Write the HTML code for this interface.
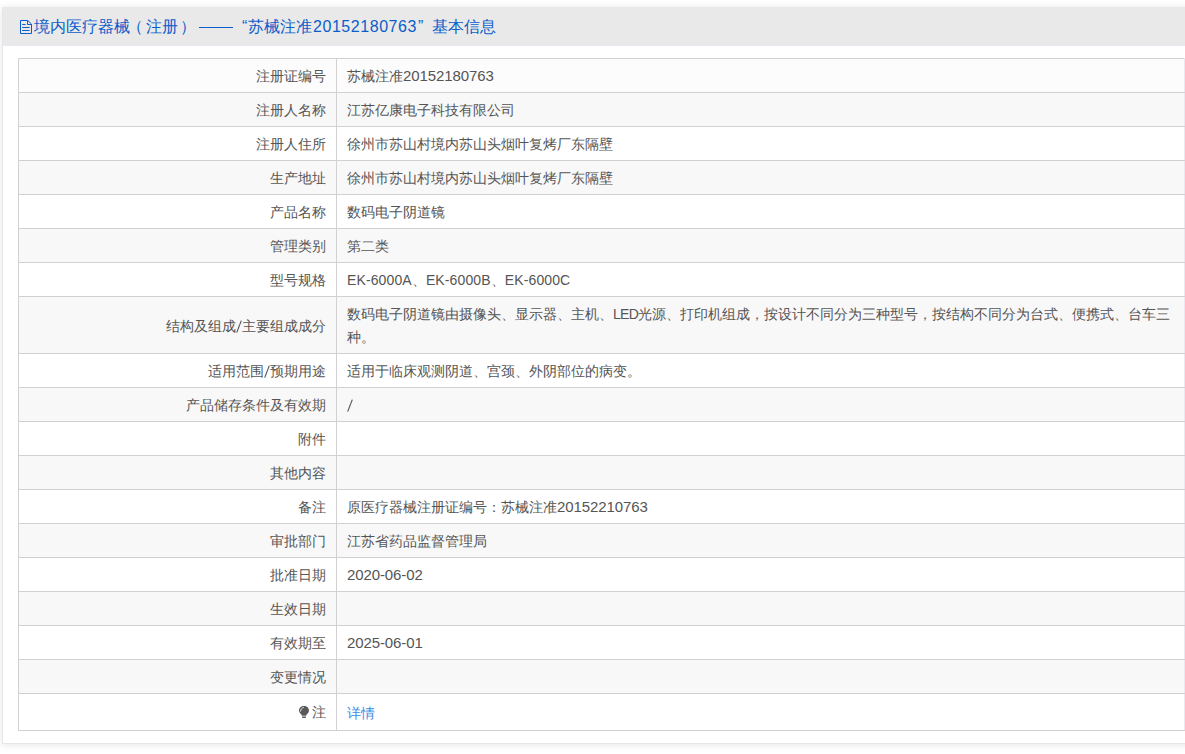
<!DOCTYPE html>
<html>
<head>
<meta charset="utf-8">
<style>
html,body{margin:0;padding:0;background:#fff;width:1185px;height:754px;overflow:hidden;}
body{font-family:"Liberation Sans",sans-serif;position:relative;text-spacing-trim:space-all;}
.panel{position:absolute;left:2px;top:7px;width:1220px;height:735px;background:#fff;border:1px solid #e6e6e6;box-shadow:0 1px 8px rgba(0,0,0,0.10);}
.hd{position:absolute;left:0;top:-1px;width:100%;height:38px;background:#e9e9e9;border-bottom:1px solid #e4e9f4;}
.hd span{position:absolute;top:9px;font-size:16px;line-height:22px;color:#0b5dc9;white-space:nowrap;}
.hd .dash{top:20px;height:1px;background:#0b5dc9;width:34px;left:196px;}
.hd svg{position:absolute;left:17px;top:13px;}
table{position:absolute;left:15px;top:50px;border-collapse:collapse;width:1167px;font-size:14px;color:#555;}
td{border:1px solid #d3d0d1;height:33px;padding:0 10px;line-height:22px;white-space:nowrap;}
td.l{width:297px;text-align:right;}
td:last-child{border-right-color:#e8e9f1;}
tr:nth-child(even) td{background:#f8f8f8;}
tr:first-child td{background:#fcfcfc;}
tr.two td{height:54px;line-height:23px;padding-top:2px;padding-bottom:0;}
tr.last td{height:36px;}
.n{letter-spacing:-0.1px;font-size:15px;}
.sl{vertical-align:-2px;}
a{color:#3a8ee6;text-decoration:none;position:relative;top:1px;}
</style>
</head>
<body>
<div class="panel">
<div class="hd">
<svg width="13" height="15" viewBox="0 0 13 15"><path d="M0.5 0.5 H7.8 L11.5 4.2 V13.5 H0.5 Z" fill="none" stroke="#0b5dc9" stroke-width="1" stroke-linejoin="round"/><path d="M7.5 0.8 V4.5 H11.3" fill="none" stroke="#0b5dc9" stroke-width="1"/><path d="M2.6 4.5 H5.2 M2.6 7.5 H9.2 M2.6 10.5 H9.2" stroke="#0b5dc9" stroke-width="1.1" stroke-linecap="round"/></svg>
<span style="left:31px">境内医疗器械</span><span style="left:123.5px">（</span><span style="left:143px">注册</span><span style="left:177px">）</span>
<div class="dash" style="position:absolute"></div>
<span style="left:239px">“</span>
<span style="left:245px">苏械注准</span>
<span class="n" style="left:310px;letter-spacing:0.55px">20152180763</span>
<span style="left:415px">”</span>
<span style="left:429px">基本信息</span>
</div>
<table>
<tr><td class="l">注册证编号</td><td>苏械注准<span class="n">20152180763</span></td></tr>
<tr><td class="l">注册人名称</td><td>江苏亿康电子科技有限公司</td></tr>
<tr><td class="l">注册人住所</td><td>徐州市苏山村境内苏山头烟叶复烤厂东隔壁</td></tr>
<tr><td class="l">生产地址</td><td>徐州市苏山村境内苏山头烟叶复烤厂东隔壁</td></tr>
<tr><td class="l">产品名称</td><td>数码电子阴道镜</td></tr>
<tr><td class="l">管理类别</td><td>第二类</td></tr>
<tr><td class="l">型号规格</td><td style="letter-spacing:0.12px">EK-6000A、EK-6000B、EK-6000C</td></tr>
<tr class="two"><td class="l">结构及组成<svg class="sl" width="6" height="13" viewBox="0 0 6 13"><path d="M0.7 12.6 L5.3 0.6" stroke="#555" stroke-width="1.15"/></svg>主要组成成分</td><td>数码电子阴道镜由摄像头、显示器、主机、<span style="letter-spacing:-0.7px">LED</span>光源、打印机组成，按设计不同分为三种型号，按结构不同分为台式、便携式、台车三<br>种。</td></tr>
<tr><td class="l">适用范围<svg class="sl" width="6" height="13" viewBox="0 0 6 13"><path d="M0.7 12.6 L5.3 0.6" stroke="#555" stroke-width="1.15"/></svg>预期用途</td><td>适用于临床观测阴道、宫颈、外阴部位的病变。</td></tr>
<tr><td class="l">产品储存条件及有效期</td><td><svg class="sl" width="6" height="13" viewBox="0 0 6 13"><path d="M0.7 12.6 L5.3 0.6" stroke="#555" stroke-width="1.15"/></svg></td></tr>
<tr><td class="l">附件</td><td></td></tr>
<tr><td class="l">其他内容</td><td></td></tr>
<tr><td class="l">备注</td><td>原医疗器械注册证编号：苏械注准<span class="n">20152210763</span></td></tr>
<tr><td class="l">审批部门</td><td>江苏省药品监督管理局</td></tr>
<tr><td class="l">批准日期</td><td class="n">2020-06-02</td></tr>
<tr><td class="l">生效日期</td><td></td></tr>
<tr><td class="l">有效期至</td><td class="n">2025-06-01</td></tr>
<tr><td class="l">变更情况</td><td></td></tr>
<tr class="last"><td class="l"><svg width="11" height="14" viewBox="0 0 11 14" style="vertical-align:-2px;margin-right:2px"><path d="M5 1 C7.8 1 10 3 10 5.6 C10 7.6 8 8.9 7 10.8 H3 C2 8.9 0 7.6 0 5.6 C0 3 2.2 1 5 1 Z" fill="#585858"/><path d="M1.6 6.2 C1.6 4.3 2.8 2.9 4.5 2.5" fill="none" stroke="#f2f2f2" stroke-width="0.9" stroke-linecap="round"/><rect x="3" y="11.6" width="4" height="1.4" rx="0.7" fill="#585858"/></svg>注</td><td><a>详情</a></td></tr>
</table>
</div>
</body>
</html>
